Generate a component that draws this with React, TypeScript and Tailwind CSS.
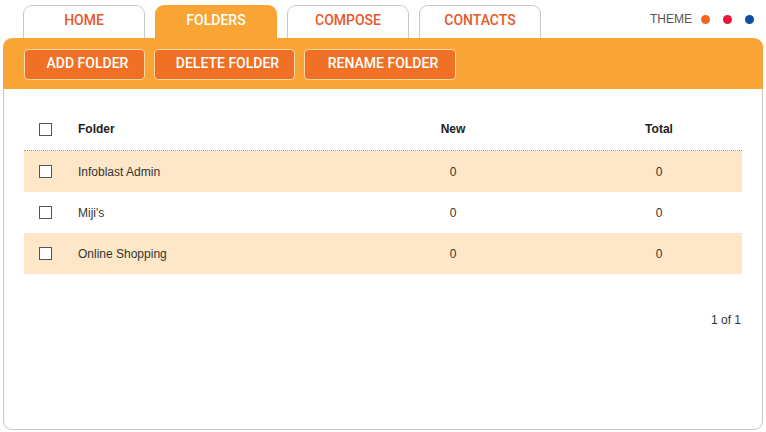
import React from "react"

const tabs = ["HOME", "FOLDERS", "COMPOSE", "CONTACTS"]
const actions = [
  { label: "ADD FOLDER", w: "w-[121px]" },
  { label: "DELETE FOLDER", w: "w-[141px]" },
  { label: "RENAME FOLDER", w: "w-[152px]" },
]
const folders = [
  { name: "Infoblast Admin", fresh: 0, total: 0 },
  { name: "Miji's", fresh: 0, total: 0 },
  { name: "Online Shopping", fresh: 0, total: 0 },
]

function Check() {
  return <span className="block h-[13px] w-[13px] border border-[#555] bg-white" />
}

export default function App() {
  return (
    <div className="h-[432px] w-[766px] bg-white font-['Liberation_Sans',Arial,sans-serif] text-[#333]">
      {/* Tabs */}
      <div className="flex items-end pl-[23px] pr-[12px] pt-[5px]">
        <div className="flex gap-[10px]">
          {tabs.map((t) => {
            const active = t === "FOLDERS"
            return (
              <div
                key={t}
                className={
                  active
                    ? "flex h-[33px] w-[122px] items-center justify-center rounded-t-[9px] bg-[#f8a535] pb-[3px] font-['Roboto',sans-serif] text-[14px] font-medium text-white"
                    : "flex h-[33px] w-[122px] items-center justify-center rounded-t-[9px] border border-b-0 border-[#c8c8c8] bg-white pb-[3px] font-['Roboto',sans-serif] text-[14px] font-medium text-[#e8582c]"
                }
              >
                {t}
              </div>
            )
          })}
        </div>
        <div className="ml-auto flex h-[33px] items-center pb-[5px]">
          <span className="mr-[9px] text-[12px] text-[#555]">THEME</span>
          <div className="flex gap-[13px]">
            <span className="h-[9px] w-[9px] rounded-full bg-[#f26522]" />
            <span className="h-[9px] w-[9px] rounded-full bg-[#e4193a]" />
            <span className="h-[9px] w-[9px] rounded-full bg-[#0b4ea2]" />
          </div>
        </div>
      </div>

      {/* Panel */}
      <div className="mx-[3px] w-[760px]">
        <div className="flex h-[51px] items-center gap-[9px] rounded-t-[9px] bg-[#f8a535] px-[21px] pt-[1px]">
          {actions.map((a) => (
            <button
              key={a.label}
              className={`${a.w} h-[31px] rounded-[4px] border border-[#fbd7a8] bg-[#f07126] pb-[2px] pl-[6px] font-['Roboto',sans-serif] text-[14px] font-medium text-white`}
            >
              {a.label}
            </button>
          ))}
        </div>

        <div className="h-[341px] rounded-b-[9px] border-x border-b border-[#c8c8c8] px-[20px] pt-[19px]">
          <div className="flex h-[43px] items-center border-b border-dotted border-[#999] text-[12px] font-bold text-[#222]">
            <div className="w-[54px] pl-[15px]">
              <Check />
            </div>
            <div className="w-[252px]">Folder</div>
            <div className="w-[246px] text-center">New</div>
            <div className="w-[166px] text-center">Total</div>
          </div>

          {folders.map((f, i) => (
            <div
              key={f.name}
              className={`flex h-[41px] items-center text-[12px] ${i % 2 === 0 ? "bg-[#fde7c8]" : "bg-white"}`}
            >
              <div className="w-[54px] pl-[15px]">
                <Check />
              </div>
              <div className="w-[252px]">{f.name}</div>
              <div className="w-[246px] text-center">{f.fresh}</div>
              <div className="w-[166px] text-center">{f.total}</div>
            </div>
          ))}

          <div className="mt-[37px] pr-[1px] text-right text-[12px]">1 of 1</div>
        </div>
      </div>
    </div>
  )
}
